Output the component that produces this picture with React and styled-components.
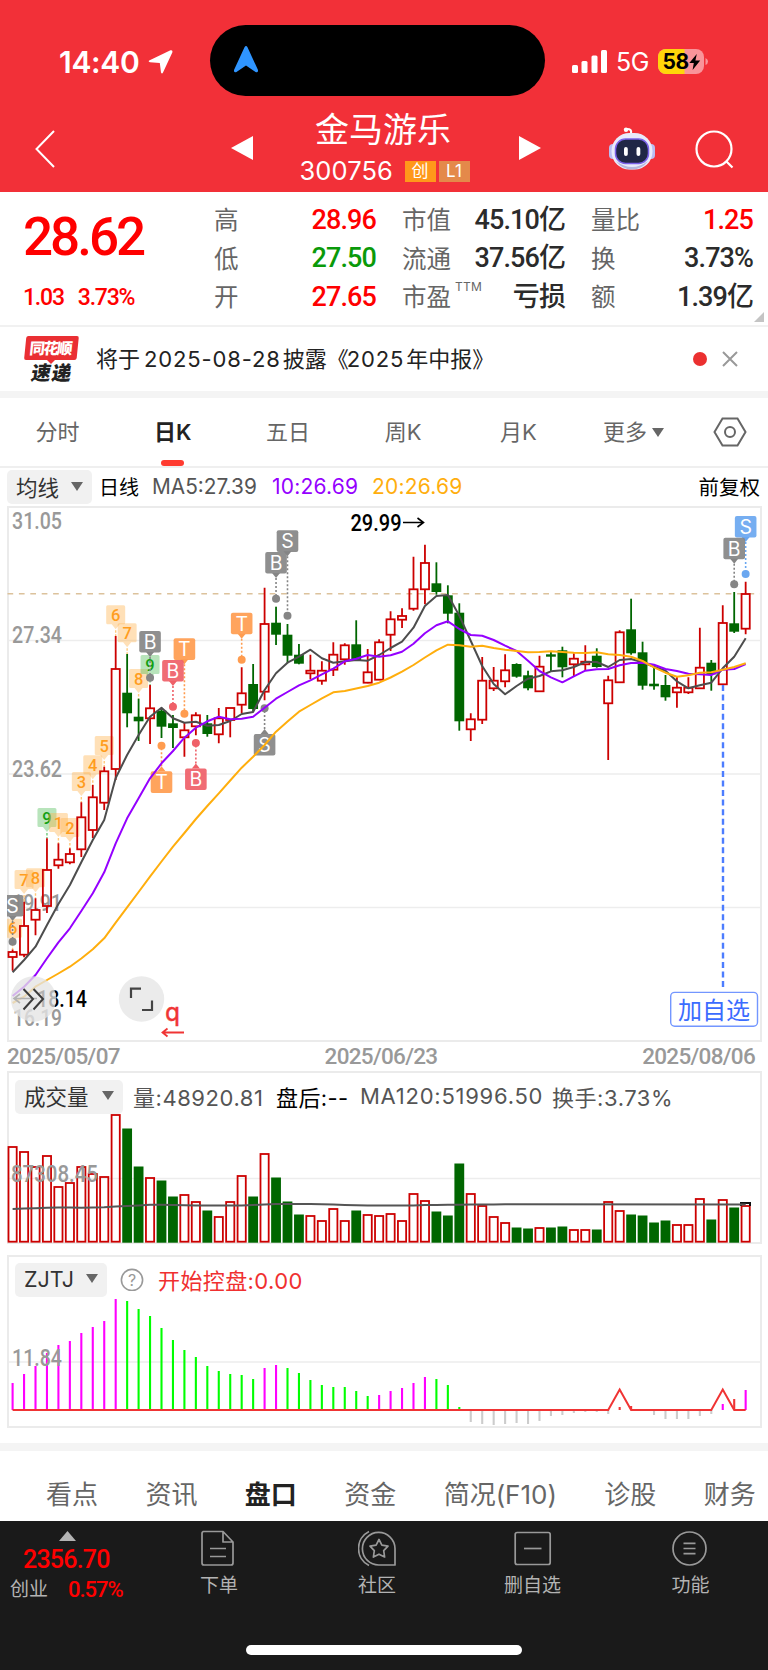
import React from 'react';
import styled, { createGlobalStyle, css } from 'styled-components';

const GlobalStyle = createGlobalStyle`
	*{box-sizing:border-box;}
	html,body{margin:0;padding:0;background:#fff;}
	body{font-family:Inter,"Noto Sans CJK SC",sans-serif;color:#333;overflow:hidden;}
	svg{display:block;flex:none;}
	svg text{white-space:pre;}
`;

const din = css`
	font-family:Roboto,"Noto Sans CJK SC",sans-serif;
	font-weight:500;
`;

const Page = styled.div`
	width:768px;
	height:1670px;
	display:flex;
	flex-direction:column;
	background:#fff;
	white-space:nowrap;
`;

/* ---------- header ---------- */
const Header = styled.header`
	height:192px;
	background:#f23038;
	color:#fff;
	display:flex;
	flex-direction:column;
`;
const StatusBar = styled.div`
	height:98px;
	padding:25px 0 2px;
	display:grid;
	grid-template-columns:210px 335px 1fr;
	align-items:center;
`;
const Clock = styled.div`
	display:flex;
	align-items:center;
	gap:8px;
	padding:2px 0 0 59px;
	font-size:30px;
	font-weight:600;
	letter-spacing:-.3px;
`;
const Island = styled.div`
	height:71px;
	border-radius:36px;
	background:#000;
	display:flex;
	align-items:center;
	padding:0 0 2px 24px;
`;
const Signal = styled.div`
	display:flex;
	align-items:center;
	padding:2px 0 0 27px;
	font-size:25px;
	letter-spacing:-.5px;
`;
const Network = styled.span`
	margin:1px 0 0 9px;
	width:42px;
`;
const NavBar = styled.div`
	height:94px;
	display:grid;
	grid-template-columns:231px 22px 1fr 22px 68px 46px 113px;
	align-items:center;
`;
const NavItem = styled.div`
	padding-left:${p => p.$left || 0}px;
	padding-top:${p => p.$top || 0}px;
`;
const Title = styled.div`
	display:flex;
	flex-direction:column;
	align-items:center;
	font-size:34px;
	line-height:38px;
	padding-top:7px;
	> span{padding-right:6px;}
`;
const Code = styled.div`
	display:flex;
	align-items:center;
	font-size:25.5px;
	line-height:30px;
	margin-top:7px;
	> span{width:105px;letter-spacing:.1px;}
`;
const Tag = styled.b`
	width:31px;
	height:21px;
	margin-right:3px;
	background:${p => p.$bg};
	font-size:17px;
	font-weight:400;
	line-height:20px;
	text-align:center;
`;

/* ---------- quote ---------- */
const Quote = styled.section`
	height:135px;
	border-bottom:2px solid #f1f1f1;
	display:grid;
	grid-template-columns:165px 162px 163px 162px;
	column-gap:26px;
	padding:9px 0 0 23px;
	position:relative;
`;
const Price = styled.div`
	${din}
	color:#f00;
	font-size:53px;
	line-height:52px;
	letter-spacing:-3px;
	padding-top:10px;
`;
const Change = styled.div`
	${din}
	color:#f00;
	display:flex;
	gap:14px;
	font-size:23px;
	line-height:28px;
	letter-spacing:-1.2px;
	margin-top:21px;
`;
const Stats = styled.div`
	display:flex;
	flex-direction:column;
`;
const Stat = styled.div`
	height:38.6px;
	display:flex;
	justify-content:space-between;
	align-items:center;
	font-size:24.5px;
	line-height:36px;
	color:#666;
	sup{font-size:12px;align-self:flex-start;margin:2px auto 0 4px;letter-spacing:.3px;line-height:14px;}
`;
const Value = styled.span`
	${din}
	color:${p => p.$color || '#2b2b2b'};
	font-size:27px;
	letter-spacing:-.9px;
	line-height:38px;
	margin-top:-1px;
`;
const Corner = styled.i`
	position:absolute;
	right:4px;
	bottom:3px;
	border:5px solid transparent;
	border-right-color:#c4c4c4;
	border-bottom-color:#c4c4c4;
`;

/* ---------- notice ---------- */
const Notice = styled.section`
	height:64px;
	display:flex;
	align-items:center;
	padding-left:24px;
	font-size:22px;
	color:#222;
	p{margin:-5px auto 0 17px;}
	em{font-style:normal;letter-spacing:.85px;padding:0 2px 0 4px;}
	em + em{padding:0 2px 0 0;margin-left:-2px;}
`;
const Dot = styled.i`
	width:14px;
	height:14px;
	border-radius:50%;
	background:#eb3030;
	margin-right:15px;
`;
const Band = styled.div`
	height:${p => p.$h}px;
	flex:none;
	background:#f4f4f4;
`;

/* ---------- period tabs ---------- */
const Periods = styled.nav`
	height:70px;
	display:grid;
	grid-template-columns:repeat(6,115.2px) 1fr;
	border-bottom:2px solid #efefef;
`;
const Period = styled.div`
	display:flex;
	flex-direction:column;
	align-items:center;
	justify-content:space-between;
	padding-top:18px;
	font-size:22px;
	line-height:33px;
	color:${p => p.$on ? '#222' : '#666'};
	font-weight:${p => p.$on ? 600 : 400};
	span{display:flex;align-items:center;gap:5px;}
	&::after{content:'';width:23px;height:6px;border-radius:3px;background:${p => p.$on ? '#ff3b30' : 'transparent'};}
`;

/* ---------- indicator lines ---------- */
const Legend = styled.div`
	height:${p => p.$h}px;
	display:flex;
	align-items:center;
	padding:${p => p.$pad};
	font-size:21px;
	color:#555;
`;
const Picker = styled.button`
	height:34px;
	width:${p => p.$w}px;
	display:flex;
	align-items:center;
	justify-content:space-between;
	padding:0 9px 2px 9px;
	border:0;
	border-radius:5px;
	background:#f1f1f1;
	color:#333;
	font:inherit;
	font-size:21.5px;
	flex:none;
`;
const Reading = styled.span`
	color:${p => p.$color || 'inherit'};
	width:${p => p.$w ? p.$w + 'px' : 'auto'};
	font-size:${p => p.$size || 21}px;
	letter-spacing:${p => p.$ls || 0}px;
	margin-left:${p => p.$push ? 'auto' : (p.$ml || 0) + 'px'};
	padding-bottom:2px;
`;
const Dates = styled.div`
	${din}
	height:29px;
	display:flex;
	justify-content:space-between;
	align-items:center;
	padding:0 13px 1px 7px;
	font-size:22.5px;
	letter-spacing:-.7px;
	color:#999;
`;
const Panel = styled.section`
	width:755px;
	height:${p => p.$h}px;
	margin:${p => p.$m};
	border:2px solid #ebebeb;
	flex:none;
`;
const Plot = styled.svg`
	width:755px;
	height:${p => p.$h}px;
	margin-left:-2px;
`;

/* ---------- lower tabs and dock ---------- */
const Sections = styled.nav`
	height:70px;
	display:flex;
	align-items:center;
	gap:47.4px;
	padding:12px 0 0 46px;
	font-size:26px;
	color:#666;
	b{color:#222;}
`;
const Dock = styled.footer`
	flex:1;
	background:#1a1a1a;
	color:#b3b3b3;
	display:flex;
	flex-direction:column;
	align-items:center;
	justify-content:space-between;
	padding-bottom:15px;
`;
const DockRow = styled.div`
	width:768px;
	height:90px;
	display:grid;
	grid-template-columns:140px 158px 158px 153px 163px;
`;
const DockItem = styled.div`
	display:flex;
	flex-direction:column;
	align-items:center;
	font-size:19px;
	line-height:24px;
	padding-top:9px;
	svg{margin-bottom:4px;}
`;
const Index = styled.div`
	${din}
	padding:10px 0 0 10px;
	color:#f00;
	svg{margin-left:49px;}
	strong{display:block;font-weight:500;font-size:25px;line-height:28px;letter-spacing:-.8px;padding:5px 0 0 13px;}
	div{display:flex;align-items:center;font-size:22px;line-height:32px;letter-spacing:-1px;}
	span{font-size:19px;font-weight:400;color:#b3b3b3;letter-spacing:0;width:58px;}
`;
const Home = styled.div`
	width:276px;
	height:10px;
	border-radius:5px;
	background:#fff;
`;

const RED = '#cc0000';
const GREEN = '#006600';
const STEP = 11.454;
const px = i => 12.6 + STEP * i;

// [up?, high, body top, body bottom, low] in screen pixels
const candles = [
	[1,949.5,952,957,970.7],[1,901.7,926,954.7,957.3],[1,898.3,910,919.7,935.3],[1,838.3,870,906,913],[1,843.3,859.7,865.3,868.7],
	[1,848.3,854,862.3,864.3],[1,802.3,817.3,849.3,857],[1,785,797.3,830,838],[1,766.7,771.3,802.7,810],[1,636,669,769,780],
	[0,654,692.7,713.3,727.3],[0,698.7,716.7,721.3,741],[1,685,708.3,718.3,744],[0,709,710.7,726.7,738],[0,715,723.3,728,748],
	[1,722.7,730.3,737.3,756.7],[1,712.3,715.3,726.3,735.3],[0,715,723.3,734,736.7],[1,708,718.3,734.3,743.3],[1,708,708,720,737.3],
	[1,667.3,693.3,704.7,713.3],[0,664,684,709,711.7],[1,587.7,624,691.7,700.3],[0,606.7,622.7,634.7,645],[0,624,634.7,655.7,663.3],
	[0,644,654.7,663.7,664.3],[1,654.7,670.7,673.3,679.3],[1,661.3,670.7,680.7,684.7],[1,642.3,654.7,669.7,676],[1,643.3,645.3,659.3,664.7],
	[0,620.3,644.3,660,660.7],[1,649,672.3,682.7,683.3],[1,639.3,642.3,679.7,680],[1,611.3,619.3,634.7,651],[1,608.3,616,619.7,628],
	[1,556.7,589.3,608.7,610.7],[1,544.7,563,589.3,604.3],[0,562.3,583.3,592,594.7],[0,585.3,595.3,613.7,623.3],[0,603.3,612.7,721.3,730.7],
	[1,713.3,719.3,729.3,741],[1,657,680.7,719.7,724],[1,667,680.7,688.3,691],[1,654.3,670.3,681.3,687.3],[0,663.3,664,676.7,677.7],
	[0,670.7,675.3,688.3,690.3],[1,655.7,666.7,691.3,692],[0,651.7,654.3,656.7,671],[0,646.7,650.3,667.3,677.3],[1,653.3,658.7,664.3,676.7],
	[1,645.3,661.7,664.3,670.7],[0,648.3,655.7,667,667.7],[1,675.7,680.3,703.3,760],[1,630.3,632.3,682.3,682.7],[0,598.7,629.3,653.3,654.7],
	[0,641.7,652.3,685.7,689.7],[0,666.7,683.7,686.3,689.7],[0,675,685,697.3,700.7],[1,676.7,687.7,692.3,707.7],[1,677.3,687.7,692.3,694],
	[1,627.7,667.7,688.3,689],[0,660,662.7,674.3,690.7],[1,605.3,623,684.3,685],[0,592,623.3,631.7,633],[1,581.7,594,628.7,634.3]
];

const ma5 = [972.3,960,946.7,925,904,885,862.3,840,820,778,755,735,716.7,707.7,718.3,722.7,721.7,725.7,725,721,714,712,690,673.3,662.7,656.7,649.7,658.3,662.7,661.3,660,660.7,655,648,641.7,627.7,606,596,595,615.7,641,666,684,694.3,686,678.7,676,671.3,670.3,667,662,662,667,660,659,662.3,666.7,670.7,681.3,688.3,685.3,682.7,668.3,656.7,638.3];
const ma10 = [996,986.7,975,958.3,942.3,928.3,911,893.3,872.3,843.3,818.3,798.3,778.3,763.3,751,737.7,727.7,721.3,716.7,719.3,718.7,716.7,707.7,698.7,692,685.3,680.3,674.3,668.7,661.3,658.7,655,656.7,655.3,651.7,643.7,633.3,625.3,621.3,629,635,635.7,640,645.7,651,660.7,671,677.3,682.3,676.3,670.7,669.3,669,665.3,663,662.7,664.7,669,671,673.7,674.3,675,669.7,669,664];
const ma20 = [1003,996.7,986.7,980,973.5,966.7,958.5,949.3,938.3,922.7,907.3,892,876.7,861.5,846.7,833,819,806,793.3,780.5,767.7,756.7,745,731.7,721.5,711.7,705,698.3,692.3,691,688.5,686,682.7,677.5,671.7,665,657.5,650.3,644.7,645.3,646.7,645.7,648,649.7,651,652.3,652,651.3,652,652.7,653,652.3,654.3,655,656.7,661,667.3,672.7,676.7,675.3,672.7,672.3,669.7,667,663.3];

const volumes = [96,91,76,87,56,60,76,69,66,128,114,76,65,62,46,48,41,32,26,41,67,46,89,65,41,28,27,22,34,22,32,28,27,29,22,49,42,31,27,79,49,37,26,20,15,14,15,15,16,13,13,13,41,32,28,27,20,22,18,18,44,23,43,35,37];
const volumeMa = [1209,1208.6,1208.2,1207.8,1207.5,1207.6,1207.8,1207.5,1207.2,1206.6,1206,1205.4,1204.8,1204.8,1205,1205.2,1205.4,1205.5,1205.6,1205.6,1205.6,1205,1204.5,1204.1,1204,1204,1204,1204.2,1204.6,1205,1205.3,1205.5,1205.6,1205.6,1205.6,1205.4,1205.1,1204.9,1204.8,1204.7,1204.6,1204.5,1204.4,1204.3];

// signed length in px and stroke
const M = '#ff00ff', G = '#00ff00', C = '#cccccc', R = '#f03434';
const flows = [
	[27,M],[36,M],[44,M],[57,M],[65,M],[69,M],[77,M],[83,M],[89,M],[111,M],[109,G],[101,G],[94,G],[82,G],[70,G],[60,G],[53,G],[44,G],[39,G],[36,G],[35,G],[31,G],
	[42,M],[45,M],[42,G],[37,G],[30,G],[25,G],[23,G],[23,G],[19,G],[14,G],[15,M],[19,M],[22,M],[27,M],[33,M],[31,G],[25,G],[3,G],
	[-12,C],[-14,C],[-16,C],[-14,C],[-13,C],[-14,C],[-11,C],[-6,C],[-5,C],[-3,C],[-2,C],[-2,C],[-4,C],[3,R],[4,R],[-1,C],[-5,C],[-9,C],[-9,C],[-9,C],[-6,C],[-4,C],[6,M],[11,R],[20,M]
];

// nine-turn counters: [index, digit, box top]
const counts = [[0,6,918.7],[1,7,870],[2,8,868.3],[3,9,808],[4,1,813],[5,2,818],[6,3,772],[7,4,755.3],[8,5,736],[9,6,605.3],[10,7,623.3],[11,8,669],[12,9,655]];

// trade marks: [index, letter, colour, box top, dot y]
const GRAY = '#858585', PINK = '#ef6068', ORANGE = '#ff9c4f', SKY = '#6aa7f0';
const marks = [
	[0,'S',GRAY,895,941.7],[12,'B',GRAY,631,677.7],[15,'T',ORANGE,638.3,713.7],[14,'B',PINK,660,706.7],[20,'T',ORANGE,612.7,659.7],
	[13,'T',ORANGE,771.3,745.7],[16,'B',PINK,768.5,743],[22,'S',GRAY,734,708.3],[24,'S',GRAY,530.3,615.7],[23,'B',GRAY,552,598.7],
	[64,'S',SKY,516,574],[63,'B',GRAY,537.7,584.3]
];

const points = list => list.map((y, i) => `${px(i).toFixed(1)},${y}`).join(' ');

const Caret = ({ color = '#666' }) => (
	<svg width="12" height="9" viewBox="0 0 12 9"><path d="M0 0h12L6 9z" fill={color} /></svg>
);

const Label = ({ x, y, w, color = '#999', children }) => (
	<text x={x} y={y} textLength={w} lengthAdjust="spacingAndGlyphs" fontFamily="Roboto" fontWeight="500" fontSize="23" fill={color}>{children}</text>
);

const Count = ({ i, n, top }) => {
	const x = px(i);
	const green = n === 9;
	return (
		<g>
			<path d={`M${x} ${top + 25}V${candles[i][1]}`} stroke={green ? '#6fc878' : '#ffc878'} strokeWidth="1.4" strokeDasharray="2.5 1.5" />
			<path d={`M${x - 8} ${top}h16q1.5 0 1.5 1.5v16q0 1.5-1.5 1.5h-4l-4 5-4-5h-4q-1.5 0-1.5-1.5v-16q0-1.5 1.5-1.5z`} fill={green ? '#4dbb55' : '#ffb14a'} opacity=".4" />
			<text x={x} y={top + 15.5} textAnchor="middle" fontFamily="Roboto" fontWeight="500" fontSize="16.5" fill={green ? '#12a012' : '#ff9d1e'}>{n}</text>
		</g>
	);
};

const Mark = ({ i, t, color, top, dot }) => {
	const x = px(i);
	const above = dot > top;
	const tip = above ? top + 21 : top;
	const d = above ? 5 : -5;
	return (
		<g>
			<path d={`M${x} ${tip + d}V${dot}`} stroke={color} strokeWidth="1.6" strokeDasharray="2 2" />
			<circle cx={x} cy={dot} r="4" fill={color} />
			<rect x={x - 10.8} y={top} width="21.6" height="21.6" rx="2" fill={color} opacity=".92" />
			<path d={`M${x - 4} ${tip}h8l-4 ${d}z`} fill={color} />
			<text x={x} y={top + 17.8} textAnchor="middle" fontFamily="Inter" fontSize="19.5" fill="#fff">{t}</text>
		</g>
	);
};

const KLine = () => (
	<Plot $h={532} viewBox="7 508 755 532">
		<path d="M9 640.5H760M9 774H760M9 907.5H760" stroke="#ededed" strokeWidth="1.5" />
		<path d="M7.5 593.7H760" stroke="#dcc29c" strokeWidth="1.5" strokeDasharray="5.7 5.7" />
		<Label x="12" y="529" w="50">31.05</Label>
		<Label x="12" y="643" w="50">27.34</Label>
		<Label x="12" y="777" w="50">23.62</Label>
		<Label x="12" y="911" w="50">19.91</Label>
		<Label x="13" y="1026" w="49">16.19</Label>
		{counts.map(([i, n, top]) => <Count key={i} i={i} n={n} top={top} />)}
		{candles.map(([up, hi, top, bottom, lo], i) => up ? (
			<g key={i} stroke={RED} strokeWidth="1.8" fill="none">
				<path d={`M${px(i)} ${hi}V${top}M${px(i)} ${bottom}V${lo}`} />
				<rect x={px(i) - 4.1} y={top} width="8.2" height={bottom - top} />
			</g>
		) : (
			<g key={i} fill={GREEN}>
				<rect x={px(i) - .9} y={hi} width="1.8" height={lo - hi} />
				<rect x={px(i) - 4.9} y={top} width="9.8" height={bottom - top} />
			</g>
		))}
		{marks.map(([i, t, color, top, dot]) => <Mark key={i} i={i} t={t} color={color} top={top} dot={dot} />)}
		<g fill="none" strokeWidth="2" strokeLinejoin="round">
			<polyline points={points(ma5)} stroke="#4d4d4d" />
			<polyline points={points(ma10)} stroke="#9500ff" />
			<polyline points={points(ma20)} stroke="#ffae0d" />
		</g>
		<path d="M723 685V987" stroke="#4c7dff" strokeWidth="2.4" strokeDasharray="6 3.55" />
		<Label x="350.5" y="531" w="51" color="#000">29.99</Label>
		<path d="M403 522.5H423M417.5 518l6 4.5-6 4.5" stroke="#000" strokeWidth="1.6" fill="none" />
		<Label x="37" y="1006.5" w="50" color="#000">18.14</Label>
		<path d="M37 998.5H14M20 994l-6 4.5 6 4.5" stroke="#000" strokeWidth="1.6" fill="none" />
		<circle cx="33.5" cy="999" r="22.7" fill="#e4e4e4" opacity=".78" />
		<path d="M23.5 989l9.5 10-9.5 10.5M33.5 989l9.5 10-9.5 10.5" stroke="#3c3c3c" strokeWidth="2" fill="none" />
		<circle cx="141.5" cy="999" r="22.7" fill="#ebebeb" />
		<path d="M131 998V988.7H141M152 1000.5V1010H142" stroke="#444" strokeWidth="2.2" fill="none" />
		<text x="165" y="1021" fontFamily="DejaVu Sans" fontSize="24" fill="#f03434" stroke="#f03434" strokeWidth=".5">q</text>
		<path d="M184 1032.5H163M167.5 1028.5l-5 4 5 4" stroke="#f03434" strokeWidth="1.8" fill="none" />
		<rect x="670.7" y="992.4" width="86.8" height="33.8" rx="4" fill="#fff" stroke="#7396ff" strokeWidth="1.4" />
		<text x="714" y="1018.5" textAnchor="middle" fontFamily="Noto Sans CJK SC" fontSize="24" fill="#3b6cff">加自选</text>
	</Plot>
);

const Volume = () => (
	<Plot $h={130} viewBox="7 1113 755 130">
		<path d="M9 1178.5H760" stroke="#ededed" strokeWidth="1.5" />
		{volumes.map((v, i) => candles[i][0] ? (
			<rect key={i} x={px(i) - 4.1} y={1243 - v} width="8.2" height={v - 1.3} fill="none" stroke={RED} strokeWidth="1.8" />
		) : (
			<rect key={i} x={px(i) - 4.9} y={1242.5 - v} width="9.8" height={v + .2} fill={GREEN} />
		))}
		<path d="M741 1206v-3h9v3" stroke="#111" strokeWidth="2" fill="none" />
		<polyline points={`${points(volumeMa)} 745.7,1204.4`} stroke="#555" strokeWidth="2" fill="none" />
		<Label x="11" y="1182" w="87">87308.45</Label>
	</Plot>
);

const Flow = () => (
	<Plot $h={127} viewBox="7 1298 755 127">
		<path d="M9 1362H760" stroke="#ededed" strokeWidth="1.5" />
		{flows.map(([v, color], i) => (
			<path key={i} d={`M${px(i)} 1410V${1410 - v}`} stroke={color} strokeWidth="2.1" />
		))}
		<polyline points={`12.6,1410 ${px(52)},1410 ${px(53)},1389.5 ${px(54)},1410 ${px(61)},1410 ${px(62)},1389.5 ${px(63)},1410 ${px(64)},1410`} stroke={R} strokeWidth="2" fill="none" />
		<Label x="12" y="1366" w="50">11.84</Label>
	</Plot>
);

const Robot = () => (
	<svg width="46" height="44" viewBox="0 0 46 44">
		<path d="M22 7c1-4-1-5-4-5" stroke="#fff" strokeWidth="2.2" fill="none" />
		<circle cx="17" cy="2.8" r="2.2" fill="#fff" />
		<rect x="0" y="17" width="8" height="15" rx="4" fill="#b9bdf2" />
		<rect x="38" y="17" width="8" height="15" rx="4" fill="#b9bdf2" />
		<rect x="2.5" y="6" width="41" height="36.5" rx="18" fill="#e9eafa" />
		<path d="M7 34q16 12 32 0-6 8.5-16 8.5T7 34z" fill="#b4b8dc" />
		<rect x="6.5" y="12" width="33" height="24.5" rx="10" fill="#202746" stroke="#7b62e8" strokeWidth="1.5" />
		<rect x="15" y="20" width="3.8" height="9" rx="1.9" fill="#fff" />
		<rect x="27.5" y="20" width="3.8" height="9" rx="1.9" fill="#fff" />
	</svg>
);

const Battery = () => (
	<svg width="52" height="26" viewBox="0 0 52 26">
		<clipPath id="cell"><rect width="46" height="25" rx="8" /></clipPath>
		<g clipPath="url(#cell)">
			<rect width="46" height="25" fill="#f9949a" />
			<rect width="26.5" height="25" fill="#ffd60a" />
		</g>
		<path d="M47.5 9q2.5 1 2.5 3.5t-2.5 3.5z" fill="#f9949a" />
		<text x="4.5" y="20.3" fontFamily="Inter" fontWeight="700" fontSize="21" letterSpacing="-.5" fill="#000">58</text>
		<path d="M38.8 5l-7.5 9h4.5l-1.2 7 7.6-9.5h-4.8z" fill="#000" />
	</svg>
);

const Courier = () => (
	<svg width="55" height="47" viewBox="0 0 55 47">
		<path d="M4.5 0H53q2 0 1.7 2l-2 20q-.3 2-2.3 2H31l-4 4-4-4H2q-2 0-1.8-2l2-20Q2.5 0 4.5 0z" fill="#ea2f33" />
		<text x="7" y="18.5" transform="skewX(-6)" textLength="43" fontFamily="Noto Sans CJK SC" fontWeight="900" fontSize="15.5" fill="#fff">同花顺</text>
		<text x="14" y="44" transform="skewX(-10)" textLength="40" fontFamily="Noto Sans CJK SC" fontWeight="900" fontSize="19.5" fill="#222">速递</text>
	</svg>
);

const dock = [
	['下单', <path key="a" d="M3 1.5H23L33 12V33q0 2-2 2H4q-2 0-2-2V3.5Q2 1.5 4 1.5zM23 2v10h10M10 18.5h16M10 26.5h16" />],
	['社区', <g key="b"><path d="M37 35H21A16.3 16.3 0 1 1 37 18.5zM11 1.5A19 19 0 0 0 11 35.5" /><path d="M21 9.5l2.9 5.6 6.1 1-4.3 4.6.9 6.3-5.6-2.8-5.6 2.8.9-6.3L12 16.1l6.1-1z" /></g>],
	['删自选', <g key="c"><rect x="1.2" y="2.5" width="35" height="32" rx="2" /><path d="M10 18.5h17.5" /></g>],
	['功能', <g key="d"><circle cx="17.5" cy="18.5" r="16.5" /><path d="M11.5 13.3h12M11.5 18.5h12M11.5 23.7h12" /></g>]
];

const stats = [
	[['高', '28.96', '#f00'], ['低', '27.50', '#0a9a0a'], ['开', '27.65', '#f00']],
	[['市值', '45.10亿'], ['流通', '37.56亿'], ['市盈', '亏损', null, 'TTM']],
	[['量比', '1.25', '#f00'], ['换', '3.73%'], ['额', '1.39亿']]
];

export default function App() {
	return (
		<Page>
			<GlobalStyle />
			<Header>
				<StatusBar>
					<Clock>
						14:40
						<svg width="25" height="24" viewBox="0 0 25 24"><path d="M22.5.3Q25 0 24.3 2.5L15 22.5q-1 2-2 0L11.8 13 2 12.2q-2.5-.7-.3-2z" fill="#fff" /></svg>
					</Clock>
					<Island>
						<svg width="24" height="27" viewBox="0 0 24 27"><path d="M10.5 1.3q1.5-2.6 3 0L24 24q.3 3-2.5 2L12 19.5 2.5 26Q-.3 27 0 24z" fill="#2f95ff" /></svg>
					</Island>
					<Signal>
						<svg width="35" height="23" viewBox="0 0 35 23" fill="#fff"><rect y="15" width="6" height="8" rx="1.5" /><rect x="9.5" y="11" width="6" height="12" rx="1.5" /><rect x="19.5" y="5.5" width="6" height="17.5" rx="1.5" /><rect x="29" width="6" height="23" rx="1.5" /></svg>
						<Network>5G</Network>
						<Battery />
					</Signal>
				</StatusBar>
				<NavBar>
					<NavItem $left={35} $top={8}>
						<svg width="20" height="38" viewBox="0 0 20 38"><path d="M19 1L1.5 19 19 37" stroke="#fff" strokeWidth="2" fill="none" /></svg>
					</NavItem>
					<NavItem $top={6}><svg width="22" height="24" viewBox="0 0 22 24"><path d="M22 0v24L0 12z" fill="#fff" /></svg></NavItem>
					<Title>
						<span>金马游乐</span>
						<Code><span>300756</span><Tag $bg="#ff981a">创</Tag><Tag $bg="#e4894a">L1</Tag></Code>
					</Title>
					<NavItem $top={6}><svg width="22" height="24" viewBox="0 0 22 24"><path d="M0 0v24l22-12z" fill="#fff" /></svg></NavItem>
					<i />
					<NavItem $top={7}><Robot /></NavItem>
					<NavItem $left={40} $top={9}>
						<svg width="40" height="40" viewBox="0 0 40 40" fill="none" stroke="#fff" strokeWidth="2.2"><circle cx="19" cy="19" r="17.5" /><path d="M31 31l6.5 6.5" /></svg>
					</NavItem>
				</NavBar>
			</Header>

			<Quote>
				<div>
					<Price>28.62</Price>
					<Change><span>1.03</span><span>3.73%</span></Change>
				</div>
				{stats.map((col, c) => (
					<Stats key={c}>
						{col.map(([name, value, color, sup]) => (
							<Stat key={name}>{name}{sup && <sup>{sup}</sup>}<Value $color={color}>{value}</Value></Stat>
						))}
					</Stats>
				))}
				<Corner />
			</Quote>

			<Notice>
				<Courier />
				<p>将于<em>2025-08-28</em>披露《<em>2025</em>年中报》</p>
				<Dot />
				<svg width="46" height="16" viewBox="0 0 46 16"><path d="M1 1l14 14M15 1L1 15" stroke="#999" strokeWidth="2" /></svg>
			</Notice>
			<Band $h={7} />

			<Periods>
				{['分时', '日K', '五日', '周K', '月K', '更多'].map(t => (
					<Period key={t} $on={t === '日K'}><span>{t}{t === '更多' && <Caret />}</span></Period>
				))}
				<NavItem $left={22} $top={19}>
					<svg width="34" height="30" viewBox="0 0 34 30" fill="none" stroke="#666" strokeWidth="2"><path d="M9.5 1.5h15l8 13.5-8 13.5h-15L1.5 15z" /><circle cx="17" cy="15" r="5" /></svg>
				</NavItem>
			</Periods>

			<Legend $h={38} $pad="0 8px 0 7px">
				<Picker $w={85}>均线<Caret /></Picker>
				<Reading $color="#000" $size={20} $ml={7} $w={53}>日线</Reading>
				<Reading $w={120} $size={20.8}>MA5:27.39</Reading>
				<Reading $w={100} $size={21} $ls={.2} $color="#9500ff">10:26.69</Reading>
				<Reading $size={21} $ls={.2} $color="#ffae0d">20:26.69</Reading>
				<Reading $color="#000" $size={20.5} $push>前复权</Reading>
			</Legend>
			<Panel $h={536} $m="0 0 0 7px"><KLine /></Panel>
			<Dates><span>2025/05/07</span><span>2025/06/23</span><span>2025/08/06</span></Dates>

			<Panel $h={173} $m="0 0 11px 7px">
				<Legend $h={40} $pad="7px 0 0 6px">
					<Picker $w={108}>成交量<Caret /></Picker>
					<Reading $size={22} $ls={.55} $ml={10} $w={143}>量:48920.81</Reading>
					<Reading $size={22} $ls={.4} $color="#000" $w={84}>盘后:--</Reading>
					<Reading $size={22} $ls={.75} $w={192}>MA120:51996.50</Reading>
					<Reading $size={22} $ls={.55}>换手:3.73%</Reading>
				</Legend>
				<Volume />
			</Panel>

			<Panel $h={173} $m="0 0 15px 7px">
				<Legend $h={41} $pad="4px 0 0 6px">
					<Picker $w={92}>ZJTJ<Caret /></Picker>
					<Reading $ml={13} $w={38}>
						<svg width="24" height="24" viewBox="0 0 24 24">
							<circle cx="12" cy="13" r="10.6" fill="none" stroke="#999" strokeWidth="1.6" />
							<text x="12" y="18.7" textAnchor="middle" fontFamily="Inter" fontSize="16" fill="#999">?</text>
						</svg>
					</Reading>
					<Reading $color="#f03030" $size={22} $ls={.4}>开始控盘:0.00</Reading>
				</Legend>
				<Flow />
			</Panel>
			<Band $h={8} />

			<Sections>
				<span>看点</span><span>资讯</span><b>盘口</b><span>资金</span><span>简况(F10)</span><span>诊股</span><span>财务</span>
			</Sections>

			<Dock>
				<DockRow>
					<Index>
						<svg width="17" height="10" viewBox="0 0 17 10"><path d="M8.5 0L17 10H0z" fill="#b3b3b3" /></svg>
						<strong>2356.70</strong>
						<div><span>创业</span>0.57%</div>
					</Index>
					{dock.map(([name, art]) => (
						<DockItem key={name}>
							<svg width="38" height="40" viewBox="0 0 38 40" fill="none" stroke="#999" strokeWidth="1.7" strokeLinejoin="round">{art}</svg>
							{name}
						</DockItem>
					))}
				</DockRow>
				<Home />
			</Dock>
		</Page>
	);
}
